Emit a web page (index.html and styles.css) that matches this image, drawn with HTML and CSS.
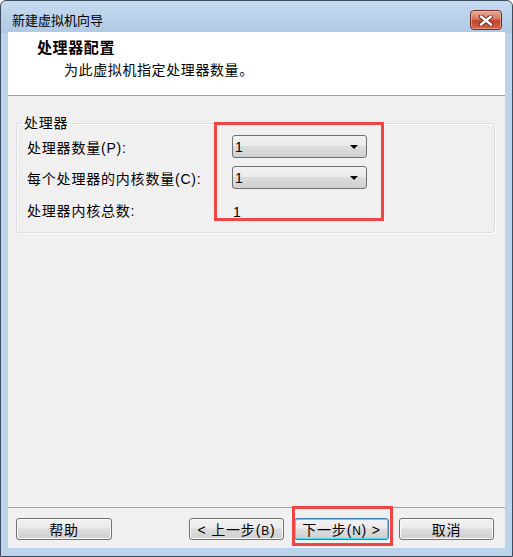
FILE: index.html
```html
<!DOCTYPE html>
<html lang="zh-CN">
<head>
    <meta charset="UTF-8">
    <meta name="viewport" content="width=device-width, initial-scale=1.0">
    <title>新建虚拟机向导</title>
    <link rel="stylesheet" href="styles.css">
</head>
<body>
    <div class="window">
        <div class="titlebar">
            <span class="caption">新建虚拟机向导</span>
            <button class="close" type="button" aria-label="关闭">
                <svg width="14" height="11" viewBox="0 0 14 11">
                    <path d="M2 1.5 L12 9.5 M12 1.5 L2 9.5" stroke="#5a2a22" stroke-width="4.2" stroke-linecap="round"/>
                    <path d="M2 1.5 L12 9.5 M12 1.5 L2 9.5" stroke="#ffffff" stroke-width="2.4" stroke-linecap="round"/>
                </svg>
            </button>
        </div>

        <div class="client">
            <div class="header">
                <div class="header-title">处理器配置</div>
                <div class="header-sub">为此虚拟机指定处理器数量。</div>
            </div>

            <div class="content">
                <fieldset class="group">
                    <legend>处理器</legend>
                    <div class="grid">
                        <label for="cpus">处理器数量(P):</label>
                        <div class="combo" id="cpus"><span>1</span><i class="arrow"></i></div>

                        <label for="cores">每个处理器的内核数量(C):</label>
                        <div class="combo" id="cores"><span>1</span><i class="arrow"></i></div>

                        <span>处理器内核总数:</span>
                        <span class="total">1</span>
                    </div>
                </fieldset>
            </div>

            <div class="footer">
                <button class="btn" type="button">帮助</button>
                <div class="spacer"></div>
                <button class="btn" type="button">&lt; 上一步(<u>B</u>)</button>
                <button class="btn default" type="button">下一步(<u>N</u>) &gt;</button>
                <button class="btn" type="button">取消</button>
            </div>
        </div>

        <!-- red annotation marks -->
        <div class="mark mark-combos"></div>
        <div class="mark mark-next"></div>
    </div>
</body>
</html>
```

FILE: styles.css
```css
body {
    margin: 0;
    font-family: "Liberation Sans", "Noto Sans CJK SC", sans-serif;
    font-size: 14px;
    color: #000;
    background: #fff;
}

.window {
    position: relative;
    width: 513px;
    height: 557px;
    box-sizing: border-box;
    border: 1px solid #3d4b5c;
    border-radius: 6px 6px 0 0;
    padding: 0 7px 8px 7px;
    background: linear-gradient(to bottom, #c6dbf0 0, #afc8e3 32px, #bcd3ec 33px, #bcd3ec 100%);
    display: flex;
    flex-direction: column;
}

.titlebar {
    height: 31px;
    display: flex;
    align-items: flex-start;
    justify-content: space-between;
    padding: 0 3px 0 4px;
}

.caption {
    font-size: 13px;
    line-height: 16px;
    margin-top: 12px;
    color: #000;
}

.close {
    margin-top: 9px;
    width: 32px;
    height: 20px;
    padding: 0;
    border: 1px solid #6e2f24;
    border-radius: 4px;
    background: linear-gradient(to bottom, #e8a896 0, #d8806a 40%, #c3452c 55%, #d0654b 100%);
    display: flex;
    align-items: center;
    justify-content: center;
    box-shadow: inset 0 0 0 1px rgba(255, 200, 190, 0.5);
}

.client {
    flex: 1;
    background: #f0f0f0;
    display: flex;
    flex-direction: column;
}

.header {
    height: 64px;
    box-sizing: border-box;
    background: #fff;
    border-bottom: 1px solid #a0a0a0;
    padding: 7px 0 0 29px;
}

.header-title {
    font-weight: bold;
    font-size: 15px;
    line-height: 18px;
    letter-spacing: 0.6px;
}

.header-sub {
    margin: 4px 0 0 27px;
    line-height: 18px;
    letter-spacing: 0.6px;
}

.content {
    flex: 1;
    padding: 19px 10px 0 8px;
}

.group {
    margin: 0;
    padding: 4px 0 9px 10px;
    border: 1px solid #d8dee3;
    border-radius: 3px;
    box-shadow: inset 1px 1px 0 #fff, 1px 1px 0 #fff;
}

.group legend {
    margin-left: -5px;
    padding: 0 2px;
    line-height: 16px;
    letter-spacing: 0.8px;
}

.grid {
    display: grid;
    grid-template-columns: 205px 135px;
    grid-template-rows: 23px 23px 26px;
    row-gap: 8px;
    align-items: center;
    letter-spacing: 0.8px;
}

.combo {
    height: 23px;
    box-sizing: border-box;
    border: 1px solid #707070;
    border-radius: 3px;
    background: linear-gradient(to bottom, #f2f2f2 0, #ebebeb 45%, #dddddd 50%, #cfcfcf 100%);
    display: flex;
    align-items: center;
    justify-content: space-between;
    padding: 0 8px 0 2px;
}

.arrow {
    width: 0;
    height: 0;
    border-left: 4px solid transparent;
    border-right: 4px solid transparent;
    border-top: 4px solid #000;
}

.total {
    padding-left: 1px;
    margin-top: 3px;
}

.footer {
    height: 41px;
    box-sizing: border-box;
    border-top: 1px solid #a0a0a0;
    padding: 10px 11px 0 8px;
    display: flex;
    align-items: flex-start;
    gap: 10px;
}

.spacer {
    flex: 1;
}

.btn {
    width: 95px;
    height: 22px;
    padding: 0;
    font-family: inherit;
    font-size: 14px;
    letter-spacing: 0.8px;
    border: 1px solid #707070;
    border-radius: 3px;
    background: linear-gradient(to bottom, #f2f2f2 0, #ebebeb 45%, #dddddd 50%, #cfcfcf 100%);
    box-shadow: inset 0 0 0 1px #fafafa;
    color: #000;
}

.btn:first-child {
    width: 96px;
}

.btn u {
    text-decoration: none;
    font-size: 12px;
}

.btn.default {
    border-color: #3c7fb1;
    box-shadow: inset 0 0 0 1px #48d8f8;
}

.mark {
    position: absolute;
    border: 3px solid #f04545;
    box-sizing: border-box;
}

.mark-combos {
    left: 213px;
    top: 121px;
    width: 170px;
    height: 99px;
}

.mark-next {
    left: 291px;
    top: 505px;
    width: 101px;
    height: 40px;
}
```
